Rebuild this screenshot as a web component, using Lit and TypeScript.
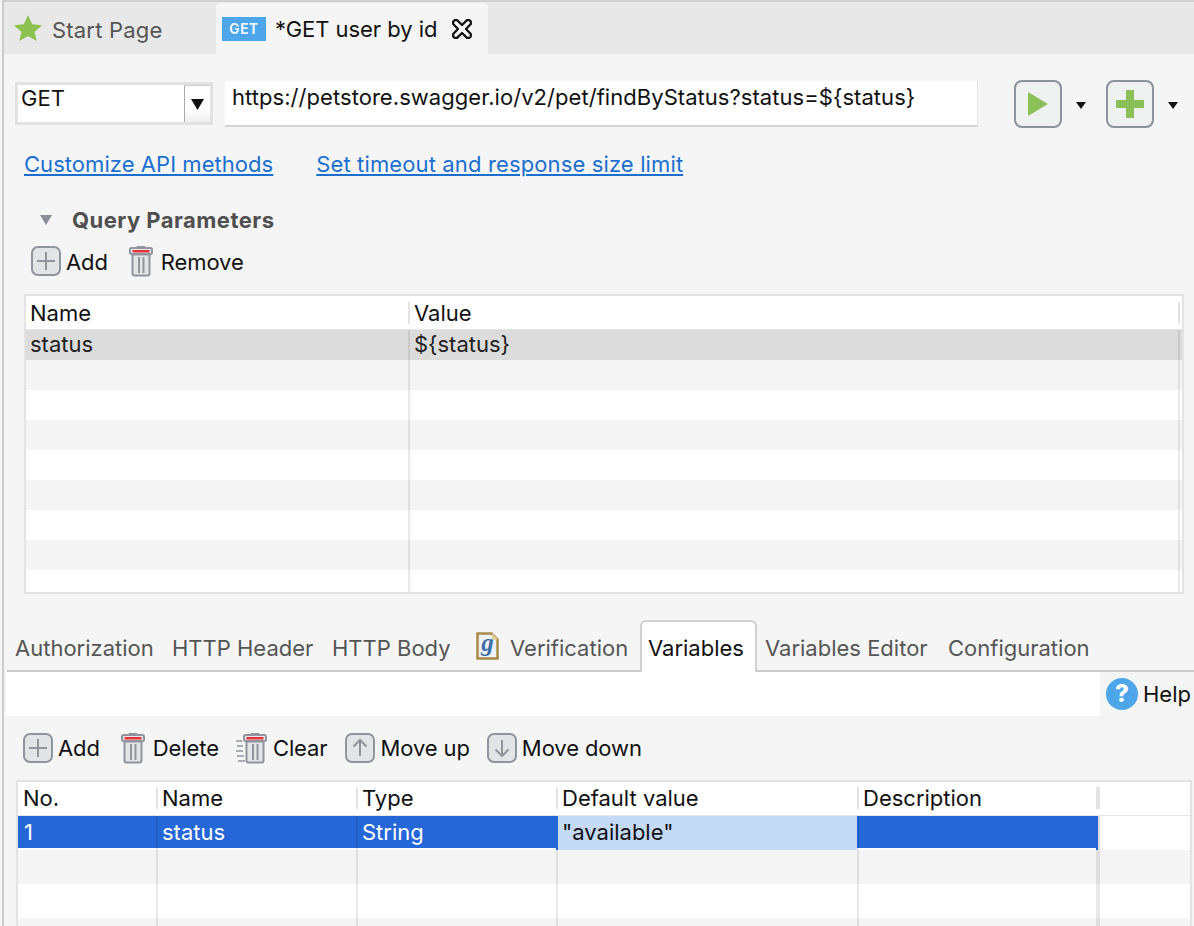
import { LitElement, html, css, svg } from "lit";
import { customElement } from "lit/decorators.js";

const plusIcon = html`<svg class="ico" width="30" height="30" viewBox="0 0 30 30"><rect x="1" y="1" width="28" height="28" rx="6" fill="#e3e4e6" stroke="#8f949d" stroke-width="2"/><path d="M15 6v18M6 15h18" stroke="#8f949d" stroke-width="2" fill="none"/></svg>`;
const arrowIcon = (d: string) => html`<svg class="ico" width="30" height="30" viewBox="0 0 30 30"><rect x="1" y="1" width="28" height="28" rx="6" fill="#e3e4e6" stroke="#8f949d" stroke-width="2"/><path d="${d}" stroke="#8f949d" stroke-width="2" fill="none"/></svg>`;
const binShape = svg`<path d="M8 1h8l1 2H7z" fill="#8f949d"/><rect x="1" y="3" width="22" height="6" rx="1.5" fill="#e8e8ea" stroke="#8f949d" stroke-width="2"/><rect x="3.500" y="5" width="17" height="2.500" fill="#e8333a"/><path d="M3.500 9.500v19q0 2 2 2h13q2 0 2-2v-19z" fill="#e3e4e6" stroke="#8f949d" stroke-width="2"/><path d="M10 12v16M14.500 12v16" stroke="#8f949d" stroke-width="2"/>`;
const binIcon = html`<svg class="ico" width="24" height="32" viewBox="0 0 24 32">${binShape}</svg>`;
const clearIcon = html`<svg class="ico" width="31" height="32" viewBox="0 0 31 32"><path d="M0 9h6M1 14h6M0 19h7M1 24h7M2 29h7" stroke="#8f949d" stroke-width="1.500"/><g transform="translate(7 0)">${binShape}</g></svg>`;

const tabs = [
  { label: "Authorization", w: 157 },
  { label: "HTTP Header", w: 160 },
  { label: "HTTP Body", w: 144 },
  { label: "Verification", w: 172, icon: true },
  { label: "Variables", w: 117, active: true },
  { label: "Variables Editor", w: 183 },
  { label: "Configuration", w: 200 },
];

@customElement("app-root")
export class AppRoot extends LitElement {
  static styles = css`
    :host { display: block; width: 1194px; height: 926px; background: #f5f5f5; font-family: Inter, "Liberation Sans", sans-serif; font-size: 22px; color: #111; }
    .root { height: 924px; margin-left: 2px; border-left: 2px solid #ccc; border-top: 2px solid #d0d0d0; overflow: hidden; }
    .ico { flex: none; display: block; }

    .topbar { height: 52px; background: #e8e8e8; display: flex; }
    .start { width: 212px; display: flex; align-items: center; padding-left: 10px; gap: 10px; color: #555; box-sizing: border-box; }
    .start span { padding-top: 3px; letter-spacing: 0.2px; }
    .doc { width: 272px; margin-top: 1px; background: #f5f5f5; border-radius: 4px 4px 0 0; display: flex; align-items: center; padding-left: 6px; box-sizing: border-box; color: #111; }
    .doc > span { padding-top: 1px; letter-spacing: -0.05px; }
    .badge { width: 44px; height: 24px; background: #4ea6ea; line-height: 24px; text-align: center; margin-right: 9px; }
    .badge span { display: block; color: #eaf5ff; font-size: 14px; font-weight: 700; letter-spacing: 0.4px; filter: blur(0.4px); }
    .close { margin-left: 15px; }

    .req { display: flex; padding: 26px 0 0 11px; height: 48px; }
    .combo { width: 198px; height: 43px; margin-top: 2px; box-sizing: border-box; border: 3px solid #e2e2e2; background: #fff; display: flex; justify-content: space-between; }
    .combo span { padding: 0 0 0 3px; line-height: 26px; }
    .drop { width: 25px; background: linear-gradient(#fff 70%, #eee); border-left: 1px solid #aaa; border-top: 1px solid #ccc; display: flex; align-items: center; justify-content: center; }
    .url { width: 753px; height: 46px; margin: 1px 0 0 12px; box-sizing: border-box; background: #fff; border-bottom: 2px solid #d5d5d5; border-right: 1px solid #e5e5e5; padding: 1px 0 0 7px; line-height: 30px; letter-spacing: 0.05px; }
    .big { width: 48px; height: 48px; box-sizing: border-box; border: 2px solid #8c929c; border-radius: 8px; background: #eff1f1; display: flex; align-items: center; justify-content: center; }
    .run { margin-left: 36px; }
    .add { margin-left: 20px; }
    .caret { margin: 22px 0 0 14px; }

    .links { display: flex; gap: 43px; margin: 21px 0 0 20px; height: 30px; line-height: 30px; }
    .links a { color: #1a6fd0; text-decoration: underline; letter-spacing: 0.05px; }
    .links a.long { letter-spacing: 0.13px; }

    .section { display: flex; align-items: center; height: 30px; margin-top: 26px; padding-left: 36px; gap: 20px; font-weight: 700; color: #4f4f4f; letter-spacing: 0.45px; }

    .tools { display: flex; align-items: center; height: 32px; line-height: 32px; color: #111; letter-spacing: -0.1px; }
    .tools.q { margin: 10px 0 0 27px; }
    .tools.q span { padding-top: 2px; }
    .tools.v { margin: 16px 0 0 19px; }
    .btn { display: flex; align-items: center; gap: 5px; margin-right: 17px; }
    .btn.wide { gap: 8px; margin-right: 17px; }
    .btn.add1 { margin-right: 21px; }
    .btn.clear { gap: 6px; margin-right: 18px; }

    .table { background: #fff; border: 2px solid #e3e3e3; box-sizing: border-box; }
    .t1 { margin: 17px 0 0 20px; width: 1160px; height: 300px; overflow: hidden; }
    .t2 { margin: 16px 0 0 12px; width: 1176px; overflow: hidden; }
    .row, .head { display: flex; }
    .t1 .head { height: 34px; border-bottom: 1px solid #e6e6e6; box-sizing: border-box; }
    .t2 .head { height: 34px; border-bottom: 1px solid #e6e6e6; box-sizing: border-box; padding-bottom: 2px; }
    .t1 .row { height: 30px; }
    .t2 .row { height: 34px; }
    .row.alt { background: #f3f4f3; }
    .row.sel { background: #dcdcdc; color: #222; }
    .hc { display: flex; align-items: center; flex: none; }
    .hc span { display: block; height: 22px; line-height: 22px; padding-left: 4px; }
    .t2 .hc.first span { padding-left: 5px; }
    .hc.rule span { border-left: 2px solid #e3e3e3; }
    .hc.rule.heavy span { border-left-width: 4px; }
    .c { flex: none; box-sizing: border-box; line-height: 29px; padding-left: 4px; border-left: 2px solid rgba(0, 0, 0, 0.085); }
    .c.first { border-left: none; }
    .c.lead { padding-left: 6px; }
    .c.end { border-left-width: 4px; }

    .row.blue { background: linear-gradient(#2566d9 32px, #fff 32px); color: #fff; }
    .row.blue .c { line-height: 32px; }
    .row.blue .c.lite { background: #c4daf7; color: #111; border-left-color: #2566d9; }
    .row.blue .c.tail { background: #fff; border-left: 2px solid #2566d9; box-shadow: inset 2px 0 #ddd; height: 34px; }

    .tabs { display: flex; height: 52px; margin: 26px 0 0 3px; box-sizing: border-box; border-bottom: 2px solid #ccc; color: #555; }
    .tab { flex: none; box-sizing: border-box; padding-left: 8px; display: flex; align-items: center; gap: 11px; height: 50px; margin-top: 1px; }
    .tab span { padding-top: 3px; }
    .tab.on { height: 52px; margin-top: 0; background: #fff; color: #111; border: 2px solid #d0d0d0; border-bottom: none; border-radius: 6px 6px 0 0; padding-left: 6px; }
    .tab.on span { padding-top: 1px; }
    .doc-ico { overflow: visible; }

    .band { display: flex; height: 44px; margin-left: 2px; }
    .blank { width: 1094px; background: #fff; }
    .help { display: flex; align-items: center; gap: 5px; padding-left: 6px; color: #111; }
  `;

  private head1() {
    return html`<div class="head"><div class="hc" style="width:382px"><span>Name</span></div><div class="hc rule" style="width:770px"><span>Value</span></div><div class="hc rule"><span></span></div></div>`;
  }

  private rows1() {
    const out = [];
    for (let i = 0; i < 9; i++) {
      const cls = i === 0 ? "sel" : i % 2 === 1 ? "alt" : "";
      out.push(html`<div class="row ${cls}"><div class="c first" style="width:382px">${i === 0 ? "status" : ""}</div><div class="c" style="width:770px">${i === 0 ? "${status}" : ""}</div><div class="c"></div></div>`);
    }
    return out;
  }

  private head2() {
    const cols = [["No.", 138], ["Name", 200], ["Type", 200], ["Default value", 301], ["Description", 239], ["", 94]] as const;
    return html`<div class="head">${cols.map(([t, w], i) => html`<div class="hc ${i ? "rule" : "first"} ${i === 5 ? "heavy" : ""}" style="width:${w}px"><span>${t}</span></div>`)}</div>`;
  }

  private rows2() {
    const widths = [138, 200, 200, 301, 239];
    const vals = ["1", "status", "String", '"available"', ""];
    const blue = html`<div class="row blue">${widths.map((w, i) => html`<div class="c ${i === 0 ? "first lead" : ""} ${i === 3 ? "lite" : ""}" style="width:${w}px">${vals[i]}</div>`)}<div class="c tail" style="width:94px"></div></div>`;
    const empties = [0, 1, 2].map((i) => html`<div class="row ${i % 2 === 0 ? "alt" : ""}">${widths.map((w, j) => html`<div class="c ${j === 0 ? "first" : ""}" style="width:${w}px"></div>`)}<div class="c end"></div></div>`);
    return [blue, ...empties];
  }

  render() {
    return html`<div class="root">
      <div class="topbar">
        <div class="start">
          <svg class="ico" width="28" height="26" viewBox="0 0 28 26"><path d="M14 0l4.200 9.200 9.800 1-7.300 6.600 2 9.200-8.700-4.900L5.300 26l2-9.200L0 10.200l9.800-1z" fill="#8cc152"/></svg>
          <span>Start Page</span>
        </div>
        <div class="doc">
          <div class="badge"><span>GET</span></div>
          <span>*GET user by id</span>
          <svg class="ico close" width="20" height="20" viewBox="0 0 20 20"><path d="M2.500 1.200h2.500l5 4.800 5-4.800h2.500l1.300 1.300v2.500l-4.800 5 4.800 5v2.500l-1.300 1.300H15l-5-4.800-5 4.800H2.500l-1.300-1.300V15L6 10 1.200 5V2.500z" fill="#fafafa" stroke="#111" stroke-width="2.300" stroke-linejoin="round"/></svg>
        </div>
      </div>

      <div class="req">
        <div class="combo"><span>GET</span><div class="drop"><svg width="13" height="11" viewBox="0 0 13 11"><path d="M0 0h13L6.500 11z" fill="#111"/></svg></div></div>
        <div class="url">https://petstore.swagger.io/v2/pet/findByStatus?status=\${status}</div>
        <div class="big run"><svg width="20" height="24" viewBox="0 0 20 24"><path d="M0 0l20 12L0 24z" fill="#8bbf59"/></svg></div>
        <svg class="ico caret" width="10" height="7" viewBox="0 0 10 7"><path d="M0 0h10L5 7z" fill="#111"/></svg>
        <div class="big add"><svg width="28" height="28" viewBox="0 0 28 28"><path d="M10 0h8v10h10v8H18v10h-8V18H0v-8h10z" fill="#8bbf59"/></svg></div>
        <svg class="ico caret" width="10" height="7" viewBox="0 0 10 7"><path d="M0 0h10L5 7z" fill="#111"/></svg>
      </div>

      <div class="links"><a>Customize API methods</a><a class="long">Set timeout and response size limit</a></div>

      <div class="section">
        <svg class="ico" width="12" height="10" viewBox="0 0 12 10"><path d="M0 0h12L6 10z" fill="#8a9099"/></svg>
        <span>Query Parameters</span>
      </div>

      <div class="tools q">
        <div class="btn add1">${plusIcon}<span>Add</span></div>
        <div class="btn wide">${binIcon}<span>Remove</span></div>
      </div>

      <div class="table t1">${this.head1()}${this.rows1()}</div>

      <div class="tabs">
        ${tabs.map((t) => html`<div class="tab ${t.active ? "on" : ""}" style="width:${t.w}px">
          ${t.icon ? html`<svg class="ico doc-ico" width="23" height="28" viewBox="0 0 23 28"><path d="M1.500 1.500h14l6 6v19h-20z" fill="#eef2f8" stroke="#a88a45" stroke-width="2.500"/><path d="M16 1v6.500h6z" fill="#e3cf95"/><text x="11.500" y="19" text-anchor="middle" font-family="Liberation Serif" font-size="25" font-style="italic" font-weight="700" fill="#3b6ea8">g</text></svg>` : ""}
          <span>${t.label}</span>
        </div>`)}
      </div>

      <div class="band">
        <div class="blank"></div>
        <div class="help">
          <svg class="ico" width="32" height="32" viewBox="0 0 32 32"><circle cx="16" cy="16" r="16" fill="#4ea6ea"/><text x="16" y="24" text-anchor="middle" font-family="Inter" font-size="24" font-weight="800" fill="#fff">?</text></svg>
          <span>Help</span>
        </div>
      </div>

      <div class="tools v">
        <div class="btn add1">${plusIcon}<span>Add</span></div>
        <div class="btn wide">${binIcon}<span>Delete</span></div>
        <div class="btn clear">${clearIcon}<span>Clear</span></div>
        <div class="btn">${arrowIcon("M15 23V7M8.500 13.500L15 7l6.500 6.500")}<span>Move up</span></div>
        <div class="btn">${arrowIcon("M15 7v16M8.500 16.500L15 23l6.500-6.500")}<span>Move down</span></div>
      </div>

      <div class="table t2">${this.head2()}${this.rows2()}</div>
    </div>`;
  }
}
